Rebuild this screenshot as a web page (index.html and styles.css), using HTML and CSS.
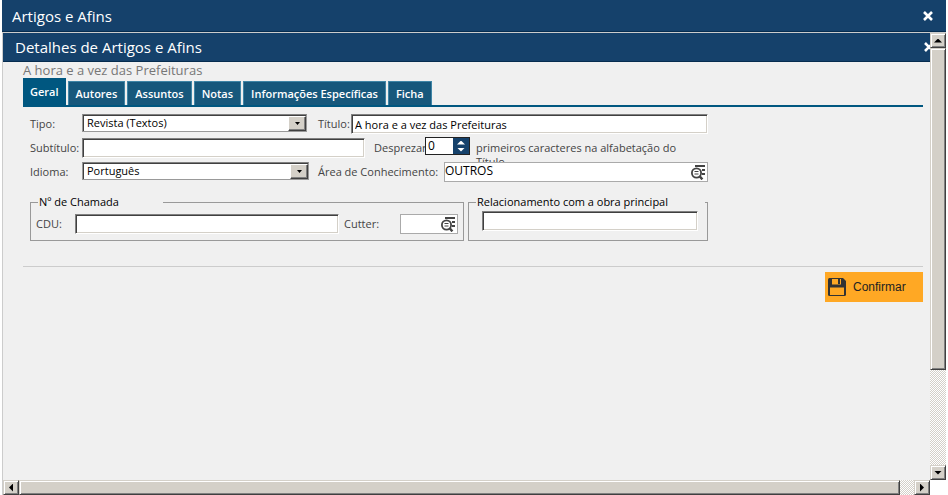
FILE: index.html
```html
<!DOCTYPE html>
<html lang="pt-BR">
<head>
    <meta charset="UTF-8">
    <meta name="viewport" content="width=device-width, initial-scale=1.0">
    <title>Artigos e Afins</title>
    <link rel="stylesheet" href="styles.css">
</head>
<body>
    <svg class="symbols" aria-hidden="true">
        <symbol id="icon-close" viewBox="0 0 10 10">
            <path d="M1 1 L9 9 M9 1 L1 9" stroke="#fff" stroke-width="2.6" />
        </symbol>
        <symbol id="icon-lookup" viewBox="0 0 14 15">
            <path d="M4 1 H14 M11 5 H14 M11 9 H14" stroke="#444" stroke-width="1.8" fill="none" />
            <circle cx="5.5" cy="8" r="4.6" stroke="#444" stroke-width="1.8" fill="none" />
            <path d="M3.5 6.5 H7.5 M3.5 9 H7.5" stroke="#444" stroke-width="1" />
            <path d="M8.4 11 L11.4 14.4" stroke="#444" stroke-width="2.4" />
        </symbol>
    </svg>

    <div class="window">
        <header class="title-bar">
            <h1>Artigos e Afins</h1>
            <button class="close-btn" aria-label="Fechar"><svg><use href="#icon-close" /></svg></button>
        </header>

        <div class="frame">
            <div class="view">
                <header class="title-bar detail">
                    <h2>Detalhes de Artigos e Afins</h2>
                    <button class="close-btn" aria-label="Fechar detalhes"><svg><use href="#icon-close" /></svg></button>
                </header>

                <main>
                    <p class="record-title">A hora e a vez das Prefeituras</p>
                    <nav class="tabs">
                        <button class="tab active">Geral</button>
                        <button class="tab">Autores</button>
                        <button class="tab">Assuntos</button>
                        <button class="tab">Notas</button>
                        <button class="tab">Informações Específicas</button>
                        <button class="tab">Ficha</button>
                    </nav>

                    <form class="form">
                        <div class="row">
                            <label class="first" for="tipo">Tipo:</label>
                            <span class="select"><select id="tipo"><option>Revista (Textos)</option></select></span>
                            <label class="titulo" for="titulo">Título:</label>
                            <input class="field grow" type="text" id="titulo" value="A hora e a vez das Prefeituras">
                        </div>
                        <div class="row">
                            <label class="first" for="subtitulo">Subtítulo:</label>
                            <input class="field subtitulo" type="text" id="subtitulo">
                            <label class="desprezar" for="desprezar">Desprezar</label>
                            <span class="spinner">
                                <input type="text" id="desprezar" value="0">
                                <span class="spin-btns">
                                    <button type="button" class="arrow up" aria-label="Aumentar"></button>
                                    <button type="button" class="arrow down" aria-label="Diminuir"></button>
                                </span>
                            </span>
                            <span class="hint">primeiros caracteres na alfabetação do Título</span>
                        </div>
                        <div class="row">
                            <label class="first" for="idioma">Idioma:</label>
                            <span class="select wide"><select id="idioma"><option>Português</option></select></span>
                            <label class="area" for="area">Área de Conhecimento:</label>
                            <span class="lookup grow">
                                <input type="text" id="area" value="OUTROS">
                                <button type="button" aria-label="Pesquisar área"><svg><use href="#icon-lookup" /></svg></button>
                            </span>
                        </div>

                        <div class="groups">
                            <fieldset class="chamada">
                                <legend>Nº de Chamada</legend>
                                <label class="cdu" for="cdu">CDU:</label>
                                <input class="field grow" type="text" id="cdu">
                                <label class="cutter" for="cutter">Cutter:</label>
                                <span class="lookup small">
                                    <input type="text" id="cutter">
                                    <button type="button" aria-label="Pesquisar cutter"><svg><use href="#icon-lookup" /></svg></button>
                                </span>
                            </fieldset>
                            <fieldset class="relacao">
                                <legend>Relacionamento com a obra principal</legend>
                                <input class="field grow" type="text" aria-label="Relacionamento com a obra principal">
                            </fieldset>
                        </div>
                    </form>

                    <div class="actions">
                        <button class="confirm">
                            <svg viewBox="0 0 18 18">
                                <path d="M1.5 0 H15 L18 3 V16.5 Q18 18 16.5 18 H1.5 Q0 18 0 16.5 V1.5 Q0 0 1.5 0 Z" fill="#333" />
                                <path d="M4 1 H13 V6.5 H4 Z M2 9.5 H16 V17 H2 Z" fill="#ffa824" />
                                <path d="M10 1 H12 V6 H10 Z" fill="#333" />
                            </svg>
                            Confirmar
                        </button>
                    </div>
                </main>
            </div>

            <div class="scroll vertical">
                <button class="scroll-btn" aria-label="Rolar para cima"><span class="arrow up"></span></button>
                <div class="thumb"></div>
                <button class="scroll-btn end" aria-label="Rolar para baixo"><span class="arrow down"></span></button>
            </div>
            <div class="scroll horizontal">
                <button class="scroll-btn" aria-label="Rolar para a esquerda"><span class="arrow left"></span></button>
                <div class="thumb"></div>
                <button class="scroll-btn end" aria-label="Rolar para a direita"><span class="arrow right"></span></button>
            </div>
        </div>
    </div>
</body>
</html>
```
FILE: styles.css
```css
:root {
    --navy: #15416b;
    --navy-dark: #062c4f;
    --teal: #005780;
    --tab: #17587c;
    --page: #f0f0f0;
    --face: #d4d0c8;
    --line: #999;
    --text: #444;
    --orange: #ffa824;
}

* {
    box-sizing: border-box;
}

body {
    margin: 0;
    background-color: #fff;
    color: var(--text);
    font-family: "Open Sans", "Noto Sans", sans-serif;
    font-size: 11px;
    line-height: 16px;
}

button,
input,
select {
    margin: 0;
    padding: 0;
    border: none;
    border-radius: 0;
    font: inherit;
    color: #000;
}

button {
    background: none;
    cursor: pointer;
}

.symbols {
    display: none;
}

.window {
    display: flex;
    flex-direction: column;
    height: 100vh;
    margin: 0 2px;
}

/* Title bars */
.title-bar {
    display: flex;
    align-items: center;
    justify-content: space-between;
    height: 32px;
    padding: 0 13px 0 10px;
    background-color: var(--navy);
    border-bottom: 1px solid var(--navy-dark);
    color: #fff;
}

.title-bar h1,
.title-bar h2 {
    margin: 0;
    font-size: 15px;
    font-weight: normal;
}

.title-bar.detail {
    height: 29px;
    padding: 0 0 0 12px;
}

.close-btn {
    display: flex;
    flex-shrink: 0;
}

.close-btn svg {
    width: 10px;
    height: 10px;
}

.detail .close-btn {
    width: 6px;
    overflow: hidden;
}

.detail .close-btn svg {
    flex-shrink: 0;
}

.frame {
    flex: 1;
    min-height: 0;
    display: grid;
    grid-template-columns: 1fr 16px;
    grid-template-rows: 1fr 15px;
    border-top: 1px solid #ccc;
    border-left: 1px solid #ccc;
}

.view {
    overflow: hidden;
    background-color: var(--page);
}

main {
    padding: 0 7px 0 20px;
}

.record-title {
    margin: 0;
    font-size: 13px;
    color: #777;
}

/* Tabs */
.tabs {
    display: flex;
    align-items: flex-end;
    gap: 2px;
    border-bottom: 2px solid var(--teal);
}

.tab {
    height: 24px;
    padding: 0 7px;
    background-color: var(--tab);
    border: 1px solid #3f85a6;
    border-bottom: none;
    color: #fff;
    font-size: 11px;
    font-weight: 600;
}

.tab.active {
    height: 27px;
    padding: 0 6px;
    background-color: var(--teal);
    border-color: var(--teal);
}

/* Form */
.form {
    max-width: 685px;
    padding: 5px 0 25px 7px;
}

.row {
    display: flex;
    height: 24px;
    align-items: center;
}

label {
    flex-shrink: 0;
    white-space: nowrap;
}

.first {
    width: 52px;
}

.titulo {
    width: 44px;
    padding-left: 11px;
}

.desprezar {
    width: 60px;
    padding-left: 9px;
}

.area {
    width: 135px;
    padding-left: 9px;
}

.grow {
    flex: 1;
    min-width: 0;
}

.field {
    height: 20px;
    padding: 0 3px;
    background-color: #fff;
    border: 1px solid;
    border-color: #808080 #fff #fff #808080;
    box-shadow: inset 1px 1px #404040, inset -1px -1px var(--face);
}

.subtitulo {
    width: 283px;
}

.select {
    position: relative;
    flex-shrink: 0;
    width: 225px;
    height: 18px;
    margin-bottom: 2px;
}

.select.wide {
    width: 227px;
}

.select select {
    appearance: none;
    display: block;
    width: 100%;
    height: 100%;
    padding: 0 20px 0 4px;
    background-color: #fff;
    border: 1px solid #999;
    border-top-color: #808080;
    box-shadow: inset 1px 1px #404040;
}

/* Drop-down button and its triangle */
.select::before,
.select::after {
    content: "";
    position: absolute;
    pointer-events: none;
}

.select::before {
    top: 2px;
    right: 1px;
    bottom: 1px;
    width: 16px;
    background-color: var(--face);
    border: 1px solid;
    border-color: #fff #404040 #404040 #fff;
    box-shadow: inset -1px -1px #808080;
}

.select::after {
    top: 8px;
    right: 7px;
    width: 5px;
    height: 3px;
    background-color: #000;
    clip-path: polygon(0 0, 100% 0, 50% 100%);
}

.spinner {
    display: flex;
    flex-shrink: 0;
    width: 45px;
    height: 18px;
    margin-bottom: 4px;
    border: 1px solid #222;
    background-color: #fff;
}

.spinner input {
    flex: 1;
    min-width: 0;
    padding-left: 2px;
    background: none;
    font-size: 12px;
}

.spin-btns {
    display: flex;
    flex-direction: column;
    align-items: center;
    justify-content: center;
    gap: 3px;
    width: 16px;
    background-color: var(--navy);
}

/* Triangles shared by the spinner and the scroll bars */
.arrow {
    width: 8px;
    height: 4px;
    background-color: #000;
    clip-path: polygon(50% 0, 100% 100%, 0 100%);
}

.arrow.down {
    clip-path: polygon(0 0, 100% 0, 50% 100%);
}

.arrow.left {
    width: 4px;
    height: 8px;
    clip-path: polygon(100% 0, 100% 100%, 0 50%);
}

.arrow.right {
    width: 4px;
    height: 8px;
    clip-path: polygon(0 0, 100% 50%, 0 100%);
}

.spin-btns .arrow {
    background-color: #fff;
}

/* The second line runs under the lookup field of the next row */
.hint {
    width: 220px;
    margin-left: 6px;
    padding-top: 5px;
    align-self: flex-start;
    line-height: 14px;
}

.lookup {
    position: relative;
    display: flex;
    align-items: center;
    height: 20px;
    padding-right: 2px;
    background-color: #fff;
    border: 1px solid #aaa;
}

.lookup input {
    flex: 1;
    min-width: 0;
    padding-bottom: 2px;
    background: none;
    font-size: 12px;
}

.lookup button {
    display: flex;
}

.lookup svg {
    width: 14px;
    height: 15px;
}

.lookup.small {
    width: 58px;
}

/* Groups */
.groups {
    display: flex;
    gap: 4px;
    margin-top: 10px;
}

fieldset {
    display: flex;
    align-items: center;
    min-width: 0;
    margin: 0;
    padding: 4px 5px 6px;
    border: 1px solid var(--line);
}

legend {
    padding: 0 1px;
    color: #000;
}

.chamada {
    flex: 1;
}

.chamada legend {
    width: 125px;
    margin-left: 2px;
}

.relacao {
    width: 240px;
    padding: 1px 9px 9px 13px;
}

.relacao legend {
    width: 229px;
    margin-left: -6px;
}

.cdu {
    width: 39px;
}

.cutter {
    width: 61px;
    padding-left: 5px;
}

/* Actions */
.actions {
    display: flex;
    justify-content: flex-end;
    padding-top: 5px;
    border-top: 1px solid #ccc;
}

.confirm {
    display: flex;
    align-items: center;
    gap: 7px;
    width: 98px;
    height: 30px;
    padding-left: 3px;
    background-color: var(--orange);
    font-family: "Liberation Sans", Arial, sans-serif;
    font-size: 12px;
    color: #222;
}

.confirm svg {
    width: 18px;
    height: 18px;
}

/* Scroll bars */
.scroll {
    display: flex;
    background: repeating-conic-gradient(#fff 0 25%, var(--face) 0 50%) 0 0 / 2px 2px;
}

.scroll.vertical {
    flex-direction: column;
}

.scroll-btn,
.thumb {
    background-color: var(--face);
    border: 1px solid;
    border-color: var(--face) #404040 #404040 var(--face);
    box-shadow: inset 1px 1px #fff, inset -1px -1px #808080;
}

.scroll-btn {
    display: flex;
    align-items: center;
    justify-content: center;
    flex-shrink: 0;
    width: 16px;
    height: 15px;
}

.scroll-btn.end {
    margin-top: auto;
}

.horizontal .scroll-btn.end {
    margin: 0 0 0 auto;
}

.vertical .thumb {
    height: 72%;
}

.horizontal .thumb {
    width: 95%;
}
```
